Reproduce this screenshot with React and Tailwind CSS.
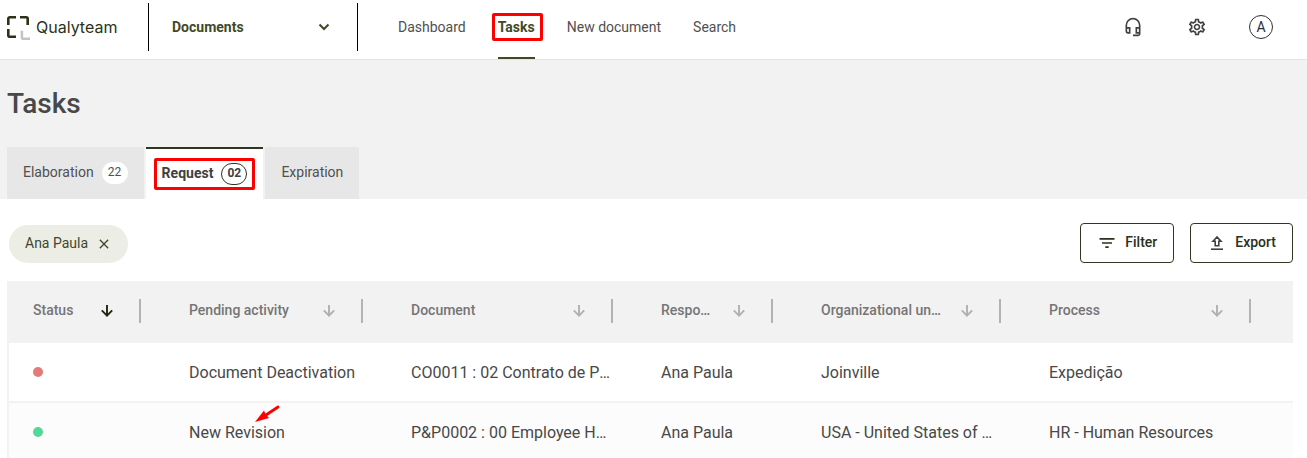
import { useState } from 'react';
import { MdClose, MdFilterList, MdOutlineHeadsetMic, MdOutlineSettings } from 'react-icons/md';

const NAV_ITEMS = ['Dashboard', 'Tasks', 'New document', 'Search'];

const TABS = [
  { id: 'elaboration', label: 'Elaboration', count: '22' },
  { id: 'request', label: 'Request', count: '02' },
  { id: 'expiration', label: 'Expiration' },
];

const COLUMNS = [
  { key: 'status', label: 'Status', width: 'w-[156px]' },
  { key: 'activity', label: 'Pending activity', width: 'w-[222px]' },
  { key: 'document', label: 'Document', width: 'w-[250px]' },
  { key: 'responsible', label: 'Responsible', width: 'w-[160px]' },
  { key: 'unit', label: 'Organizational units', width: 'w-[228px]' },
  { key: 'process', label: 'Process', width: 'w-[250px]' },
];

const ROWS = [
  {
    id: 1,
    late: true,
    activity: 'Document Deactivation',
    document: 'CO0011 : 02 Contrato de Prestação',
    responsible: 'Ana Paula',
    unit: 'Joinville',
    process: 'Expedição',
  },
  {
    id: 2,
    late: false,
    activity: 'New Revision',
    document: 'P&P0002 : 00 Employee Handbook',
    responsible: 'Ana Paula',
    unit: 'USA - United States of America',
    process: 'HR - Human Resources',
    highlighted: true,
  },
];

function Logo() {
  return (
    <a href="#home" className="flex items-center gap-1.5 text-[#2b3318]">
      <svg width="23" height="24" viewBox="0 0 23 24" fill="none" strokeWidth="2.6">
        <path d="M1.3 9V2.8a1.5 1.5 0 0 1 1.5-1.5H9" stroke="currentColor" />
        <path d="M13 1.3h6.2a1.5 1.5 0 0 1 1.5 1.5V9" stroke="currentColor" />
        <path d="M1.3 13v6.2a1.5 1.5 0 0 0 1.5 1.5H9" stroke="currentColor" />
        <path d="M14.9 14.7v6.5a1.5 1.5 0 0 0 1.5 1.5H23" stroke="#c4c4c4" />
      </svg>
      <span className="pb-0.5 font-[Inter,sans-serif] text-base leading-6">Qualyteam</span>
    </a>
  );
}

// Red frame drawn around the item being pointed out
function Highlight({ className }) {
  return (
    <span
      aria-hidden="true"
      className={`pointer-events-none absolute rounded-xs border-3 border-[#ff0000] ${className}`}
    />
  );
}

function Header() {
  return (
    <header className="flex h-15 shrink-0 border-b border-[#e3e3e3] bg-white pr-[34px] pl-[7px]">
      <div className="flex w-[141px] items-center pb-1">
        <Logo />
      </div>

      <div className="relative mt-[3px] flex h-12 w-[210px] items-center border-x border-black">
        <select
          aria-label="Module"
          className="h-full w-full appearance-none bg-transparent pl-[23px] text-sm font-bold text-[#3f4a28] outline-none"
        >
          <option>Documents</option>
        </select>
        <svg
          className="pointer-events-none absolute right-[27px] h-3 w-3"
          viewBox="0 0 12 12"
          fill="none"
          stroke="#3f4a28"
          strokeWidth="2"
        >
          <path d="M1.5 3.5 6 8l4.5-4.5" />
        </svg>
      </div>

      <nav className="ml-10 flex gap-8">
        {NAV_ITEMS.map((item) => {
          const active = item === 'Tasks';
          return (
            <a
              key={item}
              href="#nav"
              aria-current={active ? 'page' : undefined}
              className={`relative flex items-center border-b-2 pb-1 text-sm ${
                active ? 'border-[#3f4a28] font-bold text-[#3f4a28]' : 'border-transparent text-[#505050]'
              }`}
            >
              {item}
              {active && <Highlight className="top-[13px] -right-2 -left-1.5 h-7" />}
            </a>
          );
        })}
      </nav>

      <div className="ml-auto flex items-center gap-10 pb-1.5 text-[#404040]">
        <button type="button" aria-label="Support" className="flex size-6 items-center justify-center">
          <MdOutlineHeadsetMic size={20} />
        </button>
        <button type="button" aria-label="Settings" className="flex size-6 items-center justify-center">
          <MdOutlineSettings size={20} />
        </button>
        <button
          type="button"
          aria-label="Account"
          className="flex size-6 items-center justify-center rounded-full border border-[#303030] text-sm text-[#303030]"
        >
          A
        </button>
      </div>
    </header>
  );
}

function Tab({ tab, active, onSelect }) {
  return (
    <button
      type="button"
      role="tab"
      aria-selected={active}
      onClick={() => onSelect(tab.id)}
      className={`relative flex h-13 items-center gap-2 px-4 text-sm ${
        active
          ? 'border-t-2 border-[#2f3720] bg-white font-bold text-[#404040]'
          : 'bg-[#e7e7e7] text-[#505050]'
      }`}
    >
      <span className="pb-0.5">{tab.label}</span>
      {tab.count && (
        <span
          className={`flex h-[22px] w-[26px] items-center justify-center rounded-full bg-white pb-0.5 text-xs ${
            active ? 'border border-[#2f3720]' : ''
          }`}
        >
          {tab.count}
        </span>
      )}
      {active && <Highlight className="inset-x-2 top-[9px] h-8" />}
    </button>
  );
}

function ExportIcon() {
  return (
    <svg width="12" height="16" viewBox="0 0 12 16" fill="none" stroke="#404040" strokeWidth="1.6">
      <path d="M6 2 2 6.3h2.2v4.5h3.6V6.3H10z" />
      <path d="M0 14.2h12" />
    </svg>
  );
}

function SortIcon() {
  return (
    <svg width="12" height="12" viewBox="0 0 12 12" fill="none" stroke="currentColor" strokeWidth="1.9">
      <path d="M6 0v10.5M0.8 5.4 6 10.6l5.2-5.2" />
    </svg>
  );
}

function TasksTable() {
  return (
    <div className="mt-[18px] border-l-2 border-[#f2f2f2]">
      <table className="w-full table-fixed border-separate border-spacing-0 text-left">
        <thead className="bg-[#f2f2f2]">
          <tr className="h-[62px]">
            {COLUMNS.map((column) => (
              <th key={column.key} scope="col" className={`${column.width} px-6 pb-0.5 text-sm font-medium text-[#757575]`}>
                <div className="flex items-center">
                  <span className="mr-3 flex-1 truncate pb-0.5">{column.label}</span>
                  <button
                    type="button"
                    aria-label={`Sort by ${column.label}`}
                    className={`flex size-6 items-center justify-center ${
                      column.key === 'status' ? 'text-[#20260f]' : 'text-[#b0b0b0]'
                    }`}
                  >
                    <SortIcon />
                  </button>
                  <span className="ml-5 h-6 w-0.5 bg-[#b3b3b3]" />
                </div>
              </th>
            ))}
            <td />
          </tr>
        </thead>
        <tbody className="text-base text-[#484848] [&_td]:border-b-2 [&_td]:border-[#f2f2f2]">
          {ROWS.map((row) => (
            <tr key={row.id} className="h-15 even:bg-[#fcfcfc]">
              <td className="px-6">
                <span
                  role="img"
                  aria-label={row.late ? 'Late' : 'On time'}
                  className={`block size-2.5 rounded-full ${row.late ? 'bg-[#e57a7a]' : 'bg-[#57d797]'}`}
                />
              </td>
              <td className="relative px-6 pt-0.5">
                {row.activity}
                {row.highlighted && (
                  <svg className="absolute top-0.5 left-[90px]" width="26" height="18" viewBox="0 0 26 18">
                    <path d="M23 2 11 10" stroke="#ff0000" strokeWidth="2.8" strokeLinecap="round" />
                    <path d="M0 17 9 5.5l1.5 3.5 3.5 4z" fill="#ff0000" />
                  </svg>
                )}
              </td>
              <td className="truncate px-6 pt-0.5">{row.document}</td>
              <td className="truncate px-6 pt-0.5">{row.responsible}</td>
              <td className="truncate px-6 pt-0.5">{row.unit}</td>
              <td className="truncate px-6 pt-0.5">{row.process}</td>
              <td />
            </tr>
          ))}
        </tbody>
      </table>
    </div>
  );
}

export default function App() {
  const [activeTab, setActiveTab] = useState('request');
  const [showChip, setShowChip] = useState(true);

  return (
    <div className="flex h-screen flex-col overflow-hidden bg-white font-[Roboto,sans-serif]">
      <Header />

      <section className="shrink-0 bg-[#f2f2f2] pt-6 pl-[7px]">
        <h1 className="text-[28px] leading-10 font-medium text-[#484848]">Tasks</h1>
        <div role="tablist" className="mt-[23px] flex gap-0.5">
          {TABS.map((tab) => (
            <Tab key={tab.id} tab={tab} active={tab.id === activeTab} onSelect={setActiveTab} />
          ))}
        </div>
      </section>

      <main className="pt-6 pr-3.5 pl-[7px]">
        <div className="flex h-10 items-end gap-4">
          {showChip && (
            <span className="ml-0.5 flex h-[38px] items-center gap-2 rounded-full bg-[#eceee5] px-4 text-sm text-[#3f4630]">
              <span className="pb-0.5">Ana Paula</span>
              <button type="button" aria-label="Remove filter" onClick={() => setShowChip(false)}>
                <MdClose size={16} />
              </button>
            </span>
          )}
          <button
            type="button"
            className="ml-auto flex h-10 items-center gap-2 rounded-sm border border-[#2f3720] px-4 text-sm font-medium text-[#2b3020]"
          >
            <MdFilterList size={20} />
            <span className="pb-0.5">Filter</span>
          </button>
          <button
            type="button"
            className="flex h-10 items-center gap-3 rounded-sm border border-[#2f3720] pr-4 pl-5 text-sm font-medium text-[#2b3020]"
          >
            <ExportIcon />
            <span className="pb-0.5">Export</span>
          </button>
        </div>

        <TasksTable />
      </main>
    </div>
  );
}
